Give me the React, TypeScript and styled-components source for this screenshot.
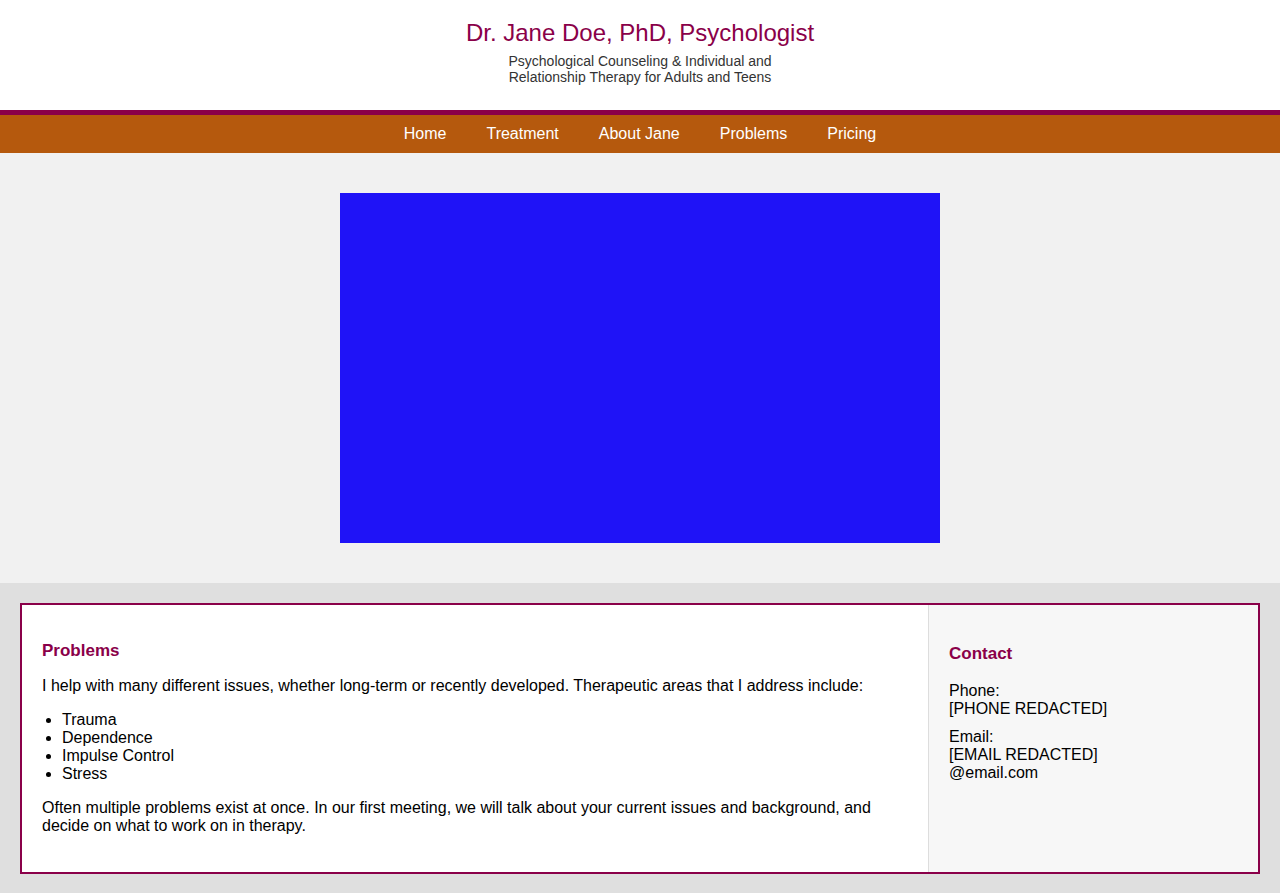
import styled, { createGlobalStyle } from 'styled-components';

const maroon = '#8a0049';

const GlobalStyle = createGlobalStyle`
  html, body {
    margin: 0;
    padding: 0;
    background: #dfdfdf;
  }

  body {
    font-family: 'Liberation Sans', Arial, sans-serif;
    color: #000;
  }
`;

const Header = styled.header`
  display: flex;
  flex-direction: column;
  align-items: center;
  padding: 19px 0 25px;
  background: #fff;
  text-align: center;
`;

const SiteTitle = styled.h1`
  margin: 0 0 6px;
  font-size: 24px;
  font-weight: normal;
  line-height: 28px;
  color: ${maroon};
`;

const Tagline = styled.p`
  max-width: 280px;
  margin: 0;
  font-size: 14px;
  line-height: 16px;
  color: #333;
`;

const Nav = styled.nav`
  display: flex;
  justify-content: center;
  gap: 40px;
  height: 38px;
  border-top: 5px solid ${maroon};
  background: #b5590d;
`;

const NavLink = styled.a`
  display: flex;
  align-items: center;
  font-size: 16px;
  color: #fff;
  text-decoration: none;
  cursor: pointer;
`;

const Hero = styled.section`
  display: flex;
  justify-content: center;
  padding: 40px 0;
  background: #f1f1f1;
`;

const HeroImage = styled.div`
  width: 600px;
  height: 350px;
  background: #1f13f7;
`;

const Main = styled.main`
  padding: 20px;
`;

const Card = styled.div`
  display: flex;
  border: 2px solid ${maroon};
  background: #fff;
`;

const Content = styled.article`
  flex: 1;
  padding: 0 20px 21px;
  font-size: 16px;
  line-height: 18px;
`;

const Sidebar = styled.aside`
  width: 289px;
  padding: 0 20px;
  border-left: 1px solid #ddd;
  background: #f7f7f7;
  font-size: 16px;
  line-height: 18px;
`;

const Heading = styled.h3<{ $top: number; $bottom: number }>`
  margin: ${(p) => p.$top}px 0 ${(p) => p.$bottom}px;
  font-size: 17px;
  line-height: 20px;
  font-weight: bold;
  color: ${maroon};
`;

const Paragraph = styled.p`
  margin: 16px 0;
`;

const List = styled.ul`
  margin: 16px 0;
  padding-left: 20px;
`;

const ContactLine = styled.p`
  margin: 0 0 10px;
`;

const navItems = ['Home', 'Treatment', 'About Jane', 'Problems', 'Pricing'];
const problems = ['Trauma', 'Dependence', 'Impulse Control', 'Stress'];

const App = () => (
  <>
    <GlobalStyle />
    <Header>
      <SiteTitle>Dr. Jane Doe, PhD, Psychologist</SiteTitle>
      <Tagline>
        Psychological Counseling &amp; Individual and Relationship Therapy for Adults and Teens
      </Tagline>
    </Header>
    <Nav>
      {navItems.map((item) => (
        <NavLink key={item}>{item}</NavLink>
      ))}
    </Nav>
    <Hero>
      <HeroImage />
    </Hero>
    <Main>
      <Card>
        <Content>
          <Heading $top={36} $bottom={16}>
            Problems
          </Heading>
          <Paragraph>
            I help with many different issues, whether long-term or recently developed. Therapeutic
            areas that I address include:
          </Paragraph>
          <List>
            {problems.map((p) => (
              <li key={p}>{p}</li>
            ))}
          </List>
          <Paragraph>
            Often multiple problems exist at once. In our first meeting, we will talk about your
            current issues and background, and decide on what to work on in therapy.
          </Paragraph>
        </Content>
        <Sidebar>
          <Heading $top={39} $bottom={18}>
            Contact
          </Heading>
          <ContactLine>
            Phone:
            <br />
            [PHONE REDACTED]
          </ContactLine>
          <ContactLine>
            Email:
            <br />
            [EMAIL REDACTED]
            <br />
            @email.com
          </ContactLine>
        </Sidebar>
      </Card>
    </Main>
  </>
);

export default App;
